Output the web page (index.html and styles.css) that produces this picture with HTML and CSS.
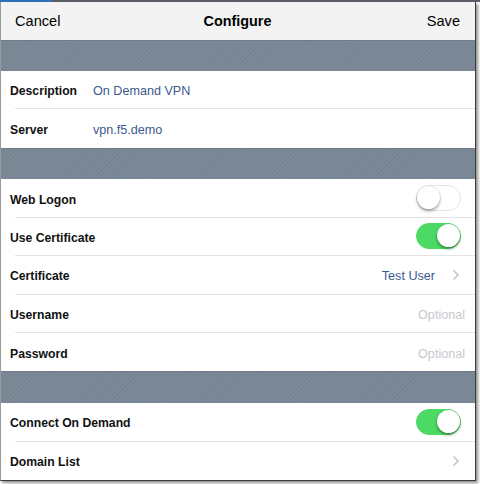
FILE: index.html
```html
<!DOCTYPE html>
<html>
<head>
<meta charset="utf-8">
<link rel="stylesheet" href="styles.css">
</head>
<body>
<div class="topstrip"><span class="blue"></span></div>
<div class="frame">
  <div class="nav">
    <span class="nav-btn">Cancel</span>
    <span class="nav-title">Configure</span>
    <span class="nav-btn save">Save</span>
  </div>
  <div class="header h1"></div>
  <div class="group">
    <div class="row"><span class="label w83">Description</span><span class="value">On Demand VPN</span></div>
    <div class="row"><span class="label w83">Server</span><span class="value">vpn.f5.demo</span></div>
  </div>
  <div class="header h2"></div>
  <div class="group">
    <div class="row"><span class="label">Web Logon</span><span class="toggle"><span class="knob"></span></span></div>
    <div class="row"><span class="label">Use Certificate</span><span class="toggle on"><span class="knob"></span></span></div>
    <div class="row"><span class="label">Certificate</span><span class="detail">Test User</span><svg class="chev" width="8" height="12" viewBox="0 0 8 12"><polyline points="1.5,1.5 6,6 1.5,10.5" fill="none" stroke="#c4c4c9" stroke-width="1.6"/></svg></div>
    <div class="row"><span class="label">Username</span><span class="placeholder">Optional</span></div>
    <div class="row"><span class="label">Password</span><span class="placeholder">Optional</span></div>
  </div>
  <div class="header h2"></div>
  <div class="group">
    <div class="row"><span class="label">Connect On Demand</span><span class="toggle on"><span class="knob"></span></span></div>
    <div class="row"><span class="label">Domain List</span><svg class="chev" width="8" height="12" viewBox="0 0 8 12"><polyline points="1.5,1.5 6,6 1.5,10.5" fill="none" stroke="#c4c4c9" stroke-width="1.6"/></svg></div>
  </div>
</div>
</body>
</html>
```

FILE: styles.css
```css
html, body {
  margin: 0;
  padding: 0;
  background: #ffffff;
  width: 480px;
  height: 484px;
  overflow: hidden;
  font-family: "Liberation Sans", Arial, sans-serif;
}
.topstrip {
  height: 2px;
  background: #5a5f66;
  display: flex;
}
.topstrip .blue {
  width: 52px;
  background: #2f6fb5;
}
.frame {
  width: 474px;
  height: 478px;
  border-left: 1px solid #9a9a9a;
  border-right: 1px solid #3a3a3a;
  border-bottom: 1px solid #3a3a3a;
  box-shadow: 2px 2px 3px rgba(0,0,0,0.45);
  background: #fff;
  display: flex;
  flex-direction: column;
  box-sizing: content-box;
}
.nav {
  height: 38px;
  background: #f3f3f3;
  display: grid;
  grid-template-columns: 1fr auto 1fr;
  align-items: center;
  padding: 0 15px 0 14px;
  font-size: 14.6px;
  color: #000;
}
.nav-btn {
  font-weight: normal;
}
.nav-btn.save {
  justify-self: end;
}
.nav-title {
  font-weight: bold;
  font-size: 14.4px;
}
.header {
  background-color: #7a8796;
  background-image: repeating-linear-gradient(135deg, rgba(255,255,255,0.025) 0 1.5px, rgba(0,0,0,0.025) 1.5px 3px);
  border-top: 1px solid #6f7b89;
  box-sizing: border-box;
}
.h1 { height: 31px; }
.h2 { height: 32px; }
.group {
  padding-left: 14px;
  background: #fff;
}
.row {
  height: 38.4px;
  box-sizing: border-box;
  display: flex;
  align-items: center;
  padding-right: 14px;
  border-bottom: 1px solid #e3e3e6;
}
.row:last-child {
  border-bottom: none;
}
.label {
  margin-left: -5px;
  padding-top: 3px;
  font-size: 12.2px;
  font-weight: bold;
  color: #111;
  flex: 1;
}
.label.w83 {
  flex: 0 0 83px;
}
.value {
  padding-top: 3px;
  font-size: 12.6px;
  color: #3b5a8e;
  flex: 1;
}
.detail {
  padding-top: 3px;
  font-size: 12.6px;
  color: #3b5a8e;
  margin-right: 17px;
}
.chev {
  display: block;
  margin-right: 1px;
}
.placeholder {
  padding-top: 3px;
  font-size: 12.6px;
  color: #c7c7cd;
  margin-right: -4px;
}
.toggle {
  width: 45px;
  height: 26px;
  border-radius: 13px;
  box-sizing: border-box;
  border: 1.5px solid #e4e4e4;
  background: #fff;
  position: relative;
  display: block;
}
.toggle .knob {
  position: absolute;
  top: 0;
  left: 0;
  width: 23px;
  height: 23px;
  border-radius: 50%;
  background: #fff;
  box-shadow: 0 2px 3px rgba(0,0,0,0.35), 0 0 0 0.5px rgba(0,0,0,0.1);
}
.toggle.on {
  background: #4cd964;
  border-color: #4cd964;
}
.toggle.on .knob {
  left: auto;
  right: 0;
}
```
